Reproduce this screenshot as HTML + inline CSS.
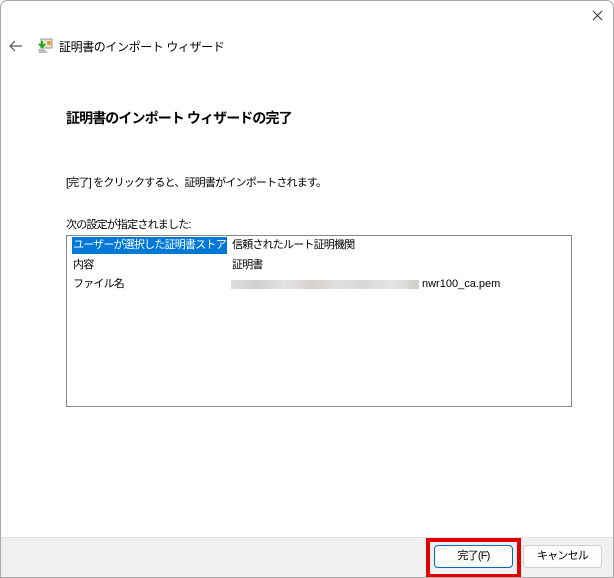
<!DOCTYPE html>
<html><head><meta charset="utf-8"><style>
body{margin:0;width:614px;height:578px;overflow:hidden;background:#fff;font-family:"Liberation Sans","Noto Sans CJK JP",sans-serif;font-size:11px;letter-spacing:-0.8px;color:#000;position:relative}
.win{position:absolute;left:0;top:0;width:612px;height:576px;border:1px solid #aaa;border-radius:7px 7px 0 0;background:#fff;overflow:hidden}
.a{position:absolute;white-space:nowrap}
.list{position:absolute;left:65px;top:234px;width:504px;height:170px;border:1px solid #828790;background:#fff}
.foot{position:absolute;left:0;top:536px;width:614px;height:42px;background:#f0f0f0;border-top:1px solid #e0e0e0}
.btn{position:absolute;top:544px;width:77px;height:21px;border:1px solid #d0d0d0;border-radius:4px;background:#fdfdfd;text-align:center;line-height:21px}
</style></head><body>
<div class="win">
<svg class="a" style="left:591px;top:9px" width="11" height="11" viewBox="0 0 11 11"><path d="M1 1l9 9M10 1l-9 9" stroke="#333" stroke-width="1"/></svg>
<svg class="a" style="left:8px;top:39px" width="14" height="12" viewBox="0 0 14 12"><path d="M13 6H1M6 1L1 6l5 5" fill="none" stroke="#555" stroke-width="1.2"/></svg>
<svg class="a" style="left:35px;top:37px" width="18" height="16" viewBox="0 0 18 16"><rect x="5" y="1" width="11" height="9" fill="#e8e4c8" stroke="#999"/><path d="M2 11l6 0 4 4H3z" fill="#bbb"/><path d="M6 3v6M3 6l3 3 3-3" stroke="#2a2" stroke-width="2" fill="none"/><circle cx="13" cy="5" r="2" fill="#e0a020"/></svg>
<div class="a" style="left:58px;top:37px;font-size:12px;letter-spacing:-0.4px">証明書のインポート ウィザード</div>
<div class="a" style="left:65px;top:107px;font-size:14px;letter-spacing:-0.9px;font-weight:bold">証明書のインポート ウィザードの完了</div>
<div class="a" style="left:65px;top:173px">[完了] をクリックすると、証明書がインポートされます。</div>
<div class="a" style="left:65px;top:215px">次の設定が指定されました:</div>
<div class="list">
<div class="a" style="left:5px;top:1px;background:#0078d7;color:#fff;padding:0 1px;height:17px;line-height:17px">ユーザーが選択した証明書ストア</div>
<div class="a" style="left:165px;top:1px;line-height:17px">信頼されたルート証明機関</div>
<div class="a" style="left:6px;top:21px;line-height:17px">内容</div>
<div class="a" style="left:165px;top:21px;line-height:17px">証明書</div>
<div class="a" style="left:6px;top:40px;line-height:17px">ファイル名</div>
<div class="a" style="left:164px;top:44px;width:188px;height:9px;background:linear-gradient(90deg,#ddd,#cfcfcf,#e4e4e4,#d6d0cc,#e0e0e0,#d8d8d8,#e6e6e6,#d0cccc)"></div>
<div class="a" style="left:355px;top:40px;line-height:17px;letter-spacing:0">nwr100_ca.pem</div>
</div>
<div class="foot"></div>
<div class="a" style="left:425px;top:537px;width:87px;height:32px;border:4px solid #e00000"></div>
<div class="btn" style="left:433px;border-color:#0067c0">完了(F)</div>
<div class="btn" style="left:522px">キャンセル</div>
</div>
</body></html>
